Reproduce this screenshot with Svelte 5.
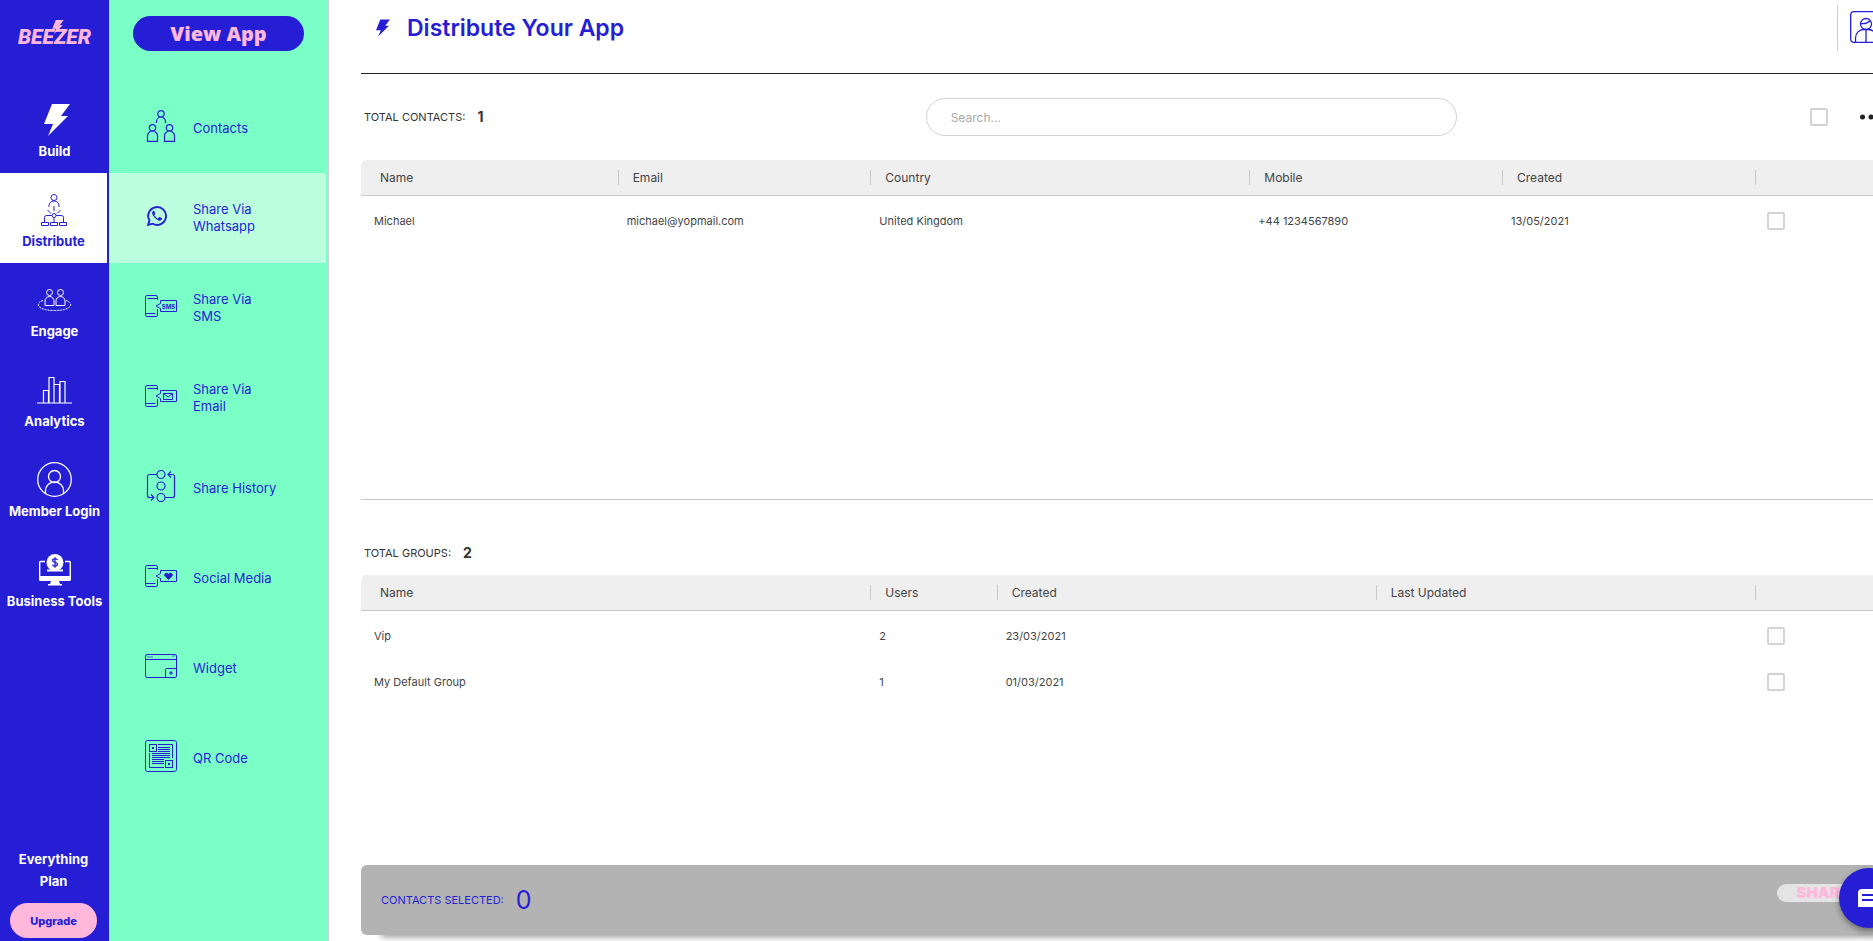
<script lang="ts">
    let search = $state('');

    const mainNav = [
        { label: 'Build', icon: 'bolt' },
        { label: 'Distribute', icon: 'distribute', active: true },
        { label: 'Engage', icon: 'engage' },
        { label: 'Analytics', icon: 'analytics' },
        { label: 'Member Login', icon: 'member' },
        { label: 'Business Tools', icon: 'business' }
    ];

    const subNav = [
        { label: 'Contacts', icon: 'contacts' },
        { label: 'Share Via\nWhatsapp', icon: 'whatsapp', active: true },
        { label: 'Share Via\nSMS', icon: 'sms' },
        { label: 'Share Via\nEmail', icon: 'email' },
        { label: 'Share History', icon: 'history' },
        { label: 'Social Media', icon: 'social' },
        { label: 'Widget', icon: 'widget' },
        { label: 'QR Code', icon: 'qr' }
    ];

    // span = how many twelfths of the table a column takes
    const contactCols = [
        { label: 'Name', span: 2 },
        { label: 'Email', span: 2 },
        { label: 'Country', span: 3 },
        { label: 'Mobile', span: 2 },
        { label: 'Created', span: 2 }
    ];
    const contacts = [
        ['Michael', 'michael@yopmail.com', 'United Kingdom', '+44 1234567890', '13/05/2021']
    ];

    const groupCols = [
        { label: 'Name', span: 4 },
        { label: 'Users', span: 1 },
        { label: 'Created', span: 3 },
        { label: 'Last Updated', span: 3 }
    ];
    const groups = [
        ['Vip', '2', '23/03/2021', ''],
        ['My Default Group', '1', '01/03/2021', '']
    ];
</script>

{#snippet phone()}
    <path d="M12.500 10V7a1.500 1.500 0 0 0-1.500-1.500H2A1.500 1.500 0 0 0 .5 7v18A1.500 1.500 0 0 0 2 26.500h9a1.500 1.500 0 0 0 1.500-1.500v-6M2.500 8.500h10M.5 23.500h10" />
    <path d="M15.500 10.500h16v11h-16v-3L11 16l4.500-2.500z" />
{/snippet}

{#snippet icon(name)}
    {#if name === 'bolt'}
        <svg class="bolt" width="26" height="32" viewBox="0 0 26 32" fill="currentColor" aria-hidden="true">
            <path d="M8 0h18l-9 12h7L4 32l5-12H0z" />
        </svg>
    {:else if name === 'distribute'}
        <svg width="26" height="32" viewBox="0 0 26 32" fill="none" stroke="currentColor" aria-hidden="true">
            <circle cx="13" cy="3.500" r="3" />
            <path d="M8 13v-1.500a5 4.500 0 0 1 10 0V13M13 12v5M6.500 16l3.500 3.500M19.500 16L16 19.500" />
            <circle cx="13" cy="21.500" r="2" />
            <path d="M11 21.500H5.500a2 2 0 0 0-2 2v5M15 21.500h5.500a2 2 0 0 1 2 2v5M13 23.500v5M.5 28.500h7v3h-7zM9.500 28.500h7v3h-7zM18.500 28.500h7v3h-7z" />
        </svg>
    {:else if name === 'engage'}
        <svg width="35" height="24" viewBox="0 0 35 24" fill="none" stroke="currentColor" aria-hidden="true">
            <circle cx="12.500" cy="4.500" r="3" />
            <circle cx="23.500" cy="4.500" r="3" />
            <path d="M8 17.500V13a4.500 4.500 0 0 1 9 0v4.500zM19 17.500V13a4.500 4.500 0 0 1 9 0v4.500z" />
            <path stroke-dasharray="2 1" d="M6 12.500C-2 15-.5 22.500 17.500 22.500s19.500-7.500 11.500-10" />
        </svg>
    {:else if name === 'analytics'}
        <svg width="35" height="28" viewBox="0 0 35 28" fill="none" stroke="currentColor" aria-hidden="true">
            <path d="M0 27h35M6.500 27V14.500h5V27M12 27V1.500h5V27M17.500 8.500h5V27M23 27V5.500h5V27" stroke-width="1.200" />
        </svg>
    {:else if name === 'member'}
        <svg width="35" height="35" viewBox="0 0 35 35" fill="none" stroke="currentColor" aria-hidden="true">
            <circle cx="17.500" cy="17.500" r="16.800" stroke-width="1.300" />
            <circle cx="17.500" cy="14.500" r="6" stroke-width="1.300" />
            <path d="M8.500 31.500v-3a9 8.500 0 0 1 18 0v3" stroke-width="1.300" />
        </svg>
    {:else if name === 'business'}
        <svg width="32" height="32" viewBox="0 0 32 32" aria-hidden="true">
            <path d="M6 7.500H1.500A1 1 0 0 0 .7 8.500V25h30.600V8.500a1 1 0 0 0-.8-1H26" fill="none" stroke="currentColor" stroke-width="1.400" />
            <path d="M0 22h32v3.500a1.500 1.500 0 0 1-1.500 1.500h-29A1.500 1.500 0 0 1 0 25.500zM12 27h8l1 3h2v1.500H9V30h2zM8 15.500h16v2H8z" fill="currentColor" />
            <circle cx="16" cy="8.500" r="8.500" fill="currentColor" />
            <path d="M18.500 6c-.5-1.500-5-1.800-5 .5 0 2.400 5 1.300 5 3.800 0 2.400-4.600 2.200-5 .4M16 3.200v10.600" fill="none" stroke="#261ed5" stroke-width="1.300" />
        </svg>
    {:else if name === 'contacts'}
        <svg width="32" height="32" viewBox="0 0 32 32" fill="none" stroke="currentColor" stroke-width="1.200" aria-hidden="true">
            <circle cx="16" cy="3.800" r="3.200" />
            <path d="M11.500 13v-1.500a4.500 4.500 0 0 1 9 0V13" />
            <circle cx="7.500" cy="17.800" r="3.200" />
            <path d="M2.500 31.400V26a5 5 0 0 1 10 0v5.400z" />
            <circle cx="24.500" cy="17.800" r="3.200" />
            <path d="M19.500 31.400V26a5 5 0 0 1 10 0v5.400z" />
        </svg>
    {:else if name === 'whatsapp'}
        <svg class="small" width="20" height="20" viewBox="0 0 20 20" aria-hidden="true">
            <path d="M1.100 18.900l1.300-4.500A8.900 8.900 0 1 1 5.700 17.700z" fill="none" stroke="currentColor" stroke-width="1.900" />
            <path d="M7.300 5.100c-.3-.6-.9-.5-1.300-.1-.8.8-1.100 2-.6 3.300.9 2.500 3.200 5 6.200 6.200 1.400.5 2.800 0 3.300-1.200.3-.7.2-1-.1-1.200l-2-1c-.4-.2-.7 0-.9.300l-.7.9c-.2.2-.4.200-.7.100-1.300-.6-2.400-1.600-3.100-2.800-.1-.3-.1-.5.1-.7l.6-.8c.2-.3.100-.5 0-.8z" fill="currentColor" />
        </svg>
    {:else if name === 'sms'}
        <svg width="32" height="32" viewBox="0 0 32 32" fill="none" stroke="currentColor" aria-hidden="true">
            {@render phone()}
            <text x="23.500" y="18.500" text-anchor="middle" font-size="6" font-weight="700" fill="currentColor" stroke="none">SMS</text>
        </svg>
    {:else if name === 'email'}
        <svg width="32" height="32" viewBox="0 0 32 32" fill="none" stroke="currentColor" aria-hidden="true">
            {@render phone()}
            <path d="M18.500 13.500h9v6h-9zM18.500 13.500l4.500 3.500 4.500-3.500" />
        </svg>
    {:else if name === 'social'}
        <svg width="32" height="32" viewBox="0 0 32 32" fill="none" stroke="currentColor" aria-hidden="true">
            {@render phone()}
            <path d="M23.500 19.500l-3.500-3.600c-1.300-2 1.500-4 3.500-1.700 2-2.300 4.800-.3 3.500 1.700z" fill="currentColor" />
        </svg>
    {:else if name === 'history'}
        <svg width="32" height="32" viewBox="0 0 32 32" fill="none" stroke="currentColor" stroke-width="1.200" aria-hidden="true">
            <circle cx="16" cy="4.500" r="4" />
            <circle cx="16" cy="16" r="4" />
            <circle cx="16" cy="27.500" r="4" />
            <path d="M12 4.500H4.500a2 2 0 0 0-2 2v19a2 2 0 0 0 2 2H8M6 24.500l3 3-3 3M20 27.500h7.500a2 2 0 0 0 2-2v-19a2 2 0 0 0-2-2H24M26 1.500l-3 3 3 3" />
        </svg>
    {:else if name === 'widget'}
        <svg width="32" height="24" viewBox="0 0 32 24" fill="none" stroke="currentColor" aria-hidden="true">
            <rect x=".5" y=".5" width="31" height="23" rx="1.500" />
            <path d="M.5 5.500h31M20.500 23.500v-8a1 1 0 0 1 1-1h10M24 19h4M26 17v4" />
            <path d="M2 3h6M27 2h3" stroke-width=".6" />
        </svg>
    {:else if name === 'qr'}
        <svg width="32" height="32" viewBox="0 0 32 32" fill="none" stroke="currentColor" aria-hidden="true">
            <rect x=".5" y=".5" width="31" height="31" rx="2" />
            <rect x="4.500" y="4.500" width="7" height="7" />
            <rect x="7" y="7" width="2" height="2" fill="currentColor" stroke="none" />
            <rect x="20.500" y="20.500" width="7" height="7" />
            <rect x="23" y="23" width="2" height="2" fill="currentColor" stroke="none" />
            <path d="M13 4.500h14.500V18M4.500 13v14.500H19M13 7.500h12M13 9.500h12M13 11.500h12M7 13.500h18M7 15.500h18M7 17.500h18M7 19.500h12M7 21.500h12M7 23.500h12" />
        </svg>
    {/if}
{/snippet}

{#snippet listing(name, cols, rows)}
    <table>
        <colgroup>
            {#each cols as col}
                <col style="width:{(col.span / 12) * 100}%" />
            {/each}
            <col />
        </colgroup>
        <thead>
            <tr>
                {#each cols as col}
                    <th scope="col"><span>{col.label}</span></th>
                {/each}
                <td><span></span></td>
            </tr>
        </thead>
        <tbody>
            {#each rows as row}
                <tr>
                    {#each row as cell}
                        <td>{cell}</td>
                    {/each}
                    <td><input type="checkbox" aria-label="Select {name} {row[0]}" /></td>
                </tr>
            {/each}
        </tbody>
    </table>
{/snippet}

<div class="app">
    <nav class="main-nav" aria-label="Main">
        <a class="logo" href="#home">
            BEEZER
            <svg width="12" height="14" viewBox="0 0 26 32" fill="currentColor" aria-hidden="true">
                <path d="M8 0h18l-9 12h7L4 32l5-12H0z" />
            </svg>
        </a>
        {#each mainNav as item}
            <a class="main-nav__item" class:active={item.active} href="#{item.icon}">
                <span class="main-nav__icon">{@render icon(item.icon)}</span>
                {item.label}
            </a>
        {/each}
        <div class="plan">
            <p>Everything Plan</p>
            <button type="button">Upgrade</button>
        </div>
    </nav>

    <nav class="sub-nav" aria-label="Distribute">
        <button class="view-app" type="button">View App</button>
        {#each subNav as item}
            <a class="sub-nav__item" class:active={item.active} href="#{item.icon}">
                <span class="sub-nav__icon">{@render icon(item.icon)}</span>
                <span class="sub-nav__label">{item.label}</span>
            </a>
        {/each}
    </nav>

    <main>
        <header>
            <svg width="14" height="18" viewBox="0 0 26 32" fill="currentColor" aria-hidden="true">
                <path d="M8 0h18l-9 12h7L4 32l5-12H0z" />
            </svg>
            <h1>Distribute Your App</h1>
            <a class="account" href="#account" aria-label="Account">
                <svg width="32" height="32" viewBox="0 0 32 32" fill="none" stroke="currentColor" stroke-width="1.300" aria-hidden="true">
                    <rect x=".7" y=".7" width="30.600" height="30.600" rx="3" />
                    <circle cx="16" cy="13" r="5.500" />
                    <path d="M11 12.500c4 .5 7-.5 9-3M5.500 31v-4c0-5 4-8.500 8-8.500h5c4 0 8 3.500 8 8.500v4M16 18.500V31" />
                </svg>
            </a>
        </header>

        <section class="contacts">
            <div class="toolbar">
                <h2>TOTAL CONTACTS: <b>1</b></h2>
                <input class="search" type="text" placeholder="Search..." aria-label="Search contacts" bind:value={search} />
                <div class="toolbar__end">
                    <input type="checkbox" aria-label="Select all contacts" />
                    <button class="more" type="button" aria-label="More options">
                        <svg width="22" height="6" viewBox="0 0 22 6" fill="currentColor" aria-hidden="true">
                            <circle cx="2.500" cy="3" r="2.500" />
                            <circle cx="11" cy="3" r="2.500" />
                            <circle cx="19.500" cy="3" r="2.500" />
                        </svg>
                    </button>
                </div>
            </div>
            {@render listing('contact', contactCols, contacts)}
        </section>

        <section class="groups">
            <h2>TOTAL GROUPS: <b>2</b></h2>
            {@render listing('group', groupCols, groups)}
        </section>

        <footer>
            <p>CONTACTS SELECTED: <span>0</span></p>
            <button type="button">SHARE</button>
        </footer>
    </main>

    <button class="chat" type="button" aria-label="Open chat">
        <svg width="22" height="18" viewBox="0 0 22 18" aria-hidden="true">
            <path d="M4 0h14a4 4 0 0 1 4 4v14H0V4a4 4 0 0 1 4-4z" fill="#fff" />
            <path d="M4 6h14M4 11h14" stroke="#261ed5" stroke-width="2" />
        </svg>
    </button>
</div>

<style>
    :global(body) {
        overflow: hidden;
        background: #fff;
    }

    .app {
        --blue: #261ed5;
        --pink: #ffb8dc;
        --line: #c8c8c8;
        display: flex;
        min-height: 100vh;
        overflow: hidden;
        color: #333;
        font: 12px/18px Inter, sans-serif;
    }

    .app * {
        box-sizing: border-box;
    }

    a {
        color: inherit;
        text-decoration: none;
    }

    button {
        border: 0;
        padding: 0;
        font: inherit;
        cursor: pointer;
    }

    h1, h2, p {
        margin: 0;
    }

    svg {
        display: block;
    }

    /* left bar */
    .main-nav {
        flex: none;
        display: flex;
        flex-direction: column;
        width: 109px;
        background: var(--blue);
        color: #fff;
        font-size: 13px;
        font-weight: 700;
        text-align: center;
        white-space: nowrap;
    }

    .logo {
        position: relative;
        height: 83px;
        padding-top: 27px;
        color: var(--pink);
        font: italic 900 21px/20px Roboto, sans-serif;
    }

    .logo svg {
        position: absolute;
        top: 20px;
        left: 52px;
    }

    .main-nav__item {
        height: 90px;
    }

    .main-nav__item.active {
        margin-right: 2px;
        background: #fff;
        color: var(--blue);
    }

    .main-nav__icon {
        display: flex;
        align-items: center;
        justify-content: center;
        height: 35px;
        margin: 19px 0 5px;
    }

    .main-nav__icon .bolt {
        margin-left: 4px;
    }

    .plan {
        margin-top: auto;
        padding: 0 12px 3px 10px;
        white-space: normal;
        line-height: 22px;
    }

    .plan button {
        width: 100%;
        height: 35px;
        margin-top: 11px;
        border-radius: 18px;
        background: var(--pink);
        color: var(--blue);
        font-size: 11px;
        font-weight: 800;
    }

    /* green bar */
    .sub-nav {
        flex: none;
        width: 220px;
        padding-right: 2px;
        border-right: 1px solid #d0d0d0;
        background: #7affc6;
        color: var(--blue);
        font-size: 13px;
        line-height: 17px;
    }

    .view-app {
        display: block;
        width: 171px;
        height: 35px;
        margin: 16px 24px 32px;
        border-radius: 18px;
        background: var(--blue);
        color: var(--pink);
        font: 800 20px/32px "Open Sans", sans-serif;
    }

    .sub-nav__item {
        display: flex;
        align-items: center;
        gap: 16px;
        height: 90px;
        padding-left: 36px;
    }

    .sub-nav__item.active {
        background: #bbffdf;
    }

    .sub-nav__icon {
        display: flex;
        align-items: center;
        justify-content: center;
        width: 32px;
        height: 32px;
        margin-bottom: 4px;
    }

    .sub-nav__icon .small {
        margin-right: 8px;
    }

    .sub-nav__label {
        white-space: pre-line;
    }

    /* content runs slightly past the right edge of the window */
    main {
        flex: 1;
        min-width: 0;
        display: flex;
        flex-direction: column;
        margin-right: -9px;
        padding: 0 0 6px 32px;
    }

    header {
        display: flex;
        align-items: center;
        gap: 17px;
        height: 74px;
        padding: 0 0 18px 15px;
        border-bottom: 1px solid #222;
        color: var(--blue);
    }

    h1 {
        font-size: 23px;
        font-weight: 600;
        line-height: 32px;
    }

    .account {
        margin-left: auto;
        padding: 6px 0 8px 12px;
        border-left: 1px solid #ccc;
    }

    h2 {
        display: flex;
        align-items: center;
        gap: 12px;
        font-size: 11px;
        font-weight: 400;
    }

    h2 b {
        font-size: 14px;
    }

    .contacts {
        flex: 7;
        border-bottom: 1px solid var(--line);
    }

    .groups {
        flex: 6;
    }

    .groups h2 {
        padding: 44px 0 13px 3px;
    }

    .toolbar {
        display: grid;
        grid-template-columns: 37fr 35fr 28fr;
        align-items: center;
        padding: 24px 0 24px 3px;
    }

    .search {
        height: 38px;
        padding: 0 24px;
        border: 1px solid #d3d3d3;
        border-radius: 19px;
        font: inherit;
    }

    .search::placeholder {
        color: #aaa;
    }

    .toolbar__end {
        display: flex;
        align-items: center;
        justify-content: flex-end;
        gap: 32px;
    }

    .more {
        background: none;
        color: #222;
    }

    input[type="checkbox"] {
        appearance: none;
        display: block;
        width: 18px;
        height: 18px;
        margin: 0;
        border: 2px solid #d3d3d3;
        border-radius: 2px;
        background: #fff;
    }

    input[type="checkbox"]:checked {
        background: var(--blue);
    }

    table {
        width: calc(100% - 5px);
        table-layout: fixed;
        border-spacing: 0;
        text-align: left;
        color: #444;
    }

    thead th,
    thead td {
        height: 36px;
        padding: 0 0 0 4px;
        border-bottom: 1px solid var(--line);
        background: #efefef;
        font-size: 12px;
        font-weight: 400;
    }

    thead th:first-child {
        border-top-left-radius: 6px;
    }

    thead span {
        display: block;
        height: 15px;
        padding-left: 14px;
        border-left: 1px solid var(--line);
        line-height: 15px;
    }

    thead th:first-child span {
        border-left-color: transparent;
    }

    tbody::before {
        content: '';
        display: block;
        height: 2px;
    }

    tbody td {
        height: 46px;
        padding: 0 0 0 13px;
        font-size: 11px;
    }

    tbody input[type="checkbox"] {
        margin-left: 3px;
    }

    footer {
        flex: none;
        display: flex;
        align-items: center;
        justify-content: space-between;
        height: 70px;
        padding: 0 13px 0 20px;
        border-radius: 6px;
        background: #b3b3b3;
        box-shadow: 16px 6px 6px -4px #999;
        color: var(--blue);
        font-size: 11px;
    }

    footer p {
        display: flex;
        align-items: center;
        gap: 12px;
    }

    footer p span {
        font-size: 25px;
    }

    footer button {
        height: 18px;
        padding: 0 20px;
        margin-bottom: 14px;
        border-radius: 9px;
        background: #e4e4e4;
        color: var(--pink);
        font-size: 15px;
        font-weight: 900;
        line-height: 18px;
    }

    .chat {
        position: fixed;
        right: -26px;
        bottom: 13px;
        display: flex;
        align-items: center;
        justify-content: center;
        width: 60px;
        height: 60px;
        border-radius: 50%;
        background: var(--blue);
        box-shadow: 0 3px 6px rgba(0, 0, 0, .4);
    }
</style>
